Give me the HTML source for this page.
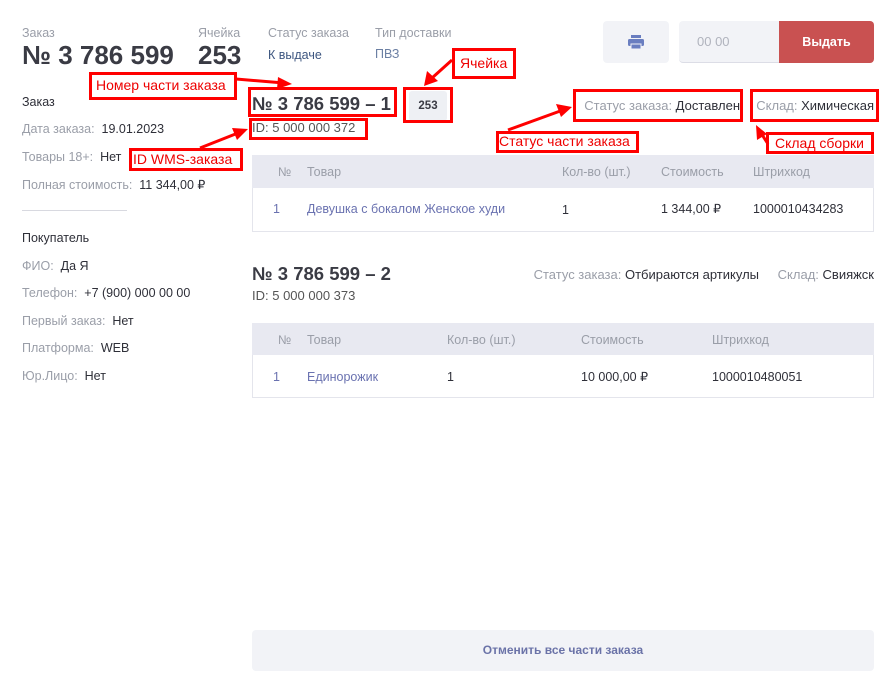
<!DOCTYPE html>
<html><head><meta charset="utf-8"><style>
*{margin:0;padding:0;box-sizing:border-box}
body{width:896px;height:687px;background:#fff;font-family:"Liberation Sans",sans-serif;position:relative;overflow:hidden;color:#2e2f38}
.a{position:absolute;white-space:nowrap}
.g{color:#9a9ea8}
.lbl{font-size:12.5px;color:#9a9ea8}
.v{font-size:12.5px;color:#2e2f38}
.big{font-size:26px;font-weight:bold;color:#3a3b44}
.h{font-size:18.5px;font-weight:bold;color:#3a3b44}
.th{position:absolute;left:252px;width:622px;background:#e8e9f1}
.tr{position:absolute;left:252px;width:622px;border:1px solid #e4e5ec;border-top:none}
.c{position:absolute;font-size:12.5px;white-space:nowrap}
.lk{color:#6a72b0}
.rb{position:absolute;border:3px solid #f00}
.rt{position:absolute;color:#e00;font-size:14px;white-space:nowrap}
</style></head><body>
<div class="a lbl" style="left:22px;top:26px">Заказ</div>
<div class="a big" style="left:22px;top:40px">№ 3 786 599</div>
<div class="a lbl" style="left:198px;top:26px">Ячейка</div>
<div class="a big" style="left:198px;top:40px">253</div>
<div class="a lbl" style="left:268px;top:26px">Статус заказа</div>
<div class="a" style="left:268px;top:48px;font-size:12.5px;color:#3d5680">К выдаче</div>
<div class="a lbl" style="left:375px;top:26px">Тип доставки</div>
<div class="a" style="left:375px;top:47px;font-size:12.5px;color:#6b7fa3">ПВЗ</div>

<div class="a" style="left:603px;top:21px;width:66px;height:42px;background:#f2f3f7;border-radius:4px">
<svg style="position:absolute;left:25px;top:14px" width="16" height="14" viewBox="0 0 16 14"><rect x="3" y="0" width="10" height="3" fill="#6a7ec0"/><rect x="0" y="4" width="16" height="7" rx="1.5" fill="#6a7ec0"/><rect x="3" y="9" width="10" height="5" fill="#6a7ec0" stroke="#f2f3f7" stroke-width="1"/></svg></div>
<div class="a" style="left:679px;top:21px;width:100px;height:42px;background:#f2f3f7;border-radius:4px 0 0 4px;border-bottom:1px solid #dcdde6"></div>
<div class="a" style="left:697px;top:34px;font-size:13px;color:#b0b3bd">00 00</div>
<div class="a" style="left:779px;top:21px;width:95px;height:42px;background:#c95151;border-radius:0 4px 4px 0;color:#fff;font-weight:bold;font-size:12.5px;text-align:center;line-height:42px">Выдать</div>

<div class="a v" style="left:22px;top:95px">Заказ</div>
<div class="a" style="left:22px;top:122px;font-size:12.5px"><span class="g">Дата заказа:</span>&nbsp; 19.01.2023</div>
<div class="a" style="left:22px;top:150px;font-size:12.5px"><span class="g">Товары 18+:</span>&nbsp; Нет</div>
<div class="a" style="left:22px;top:177px;font-size:12.5px"><span class="g">Полная стоимость:</span>&nbsp; 11 344,00 ₽</div>
<div class="a" style="left:22px;top:210px;width:105px;height:1px;background:#d8d9e0"></div>
<div class="a v" style="left:22px;top:231px">Покупатель</div>
<div class="a" style="left:22px;top:259px;font-size:12.5px"><span class="g">ФИО:</span>&nbsp; Да Я</div>
<div class="a" style="left:22px;top:286px;font-size:12.5px"><span class="g">Телефон:</span>&nbsp; +7 (900) 000 00 00</div>
<div class="a" style="left:22px;top:314px;font-size:12.5px"><span class="g">Первый заказ:</span>&nbsp; Нет</div>
<div class="a" style="left:22px;top:341px;font-size:12.5px"><span class="g">Платформа:</span>&nbsp; WEB</div>
<div class="a" style="left:22px;top:369px;font-size:12.5px"><span class="g">Юр.Лицо:</span>&nbsp; Нет</div>

<div class="a h" style="left:252px;top:93px">№ 3 786 599 – 1</div>
<div class="a" style="left:252px;top:120px;font-size:13px;color:#555">ID: 5 000 000 372</div>
<div class="a" style="left:409px;top:91px;width:38px;height:30px;background:#eef0f4;border-radius:3px;font-size:11.5px;font-weight:bold;text-align:center;line-height:30px;color:#3a3b44">253</div>
<div class="a" style="right:156px;top:98px;font-size:13px"><span class="g">Статус заказа:</span> Доставлен</div>
<div class="a" style="right:22px;top:98px;font-size:13px"><span class="g">Склад:</span> Химическая</div>

<div class="th" style="top:155px;height:33px"></div>
<div class="c g" style="left:278px;top:165px">№</div><div class="c g" style="left:307px;top:165px">Товар</div><div class="c g" style="left:562px;top:165px">Кол-во (шт.)</div><div class="c g" style="left:661px;top:165px">Стоимость</div><div class="c g" style="left:753px;top:165px">Штрихкод</div>
<div class="tr" style="top:188px;height:44px"></div>
<div class="c lk" style="left:273px;top:202px">1</div><div class="c lk" style="left:307px;top:202px">Девушка с бокалом Женское худи</div><div class="c" style="left:562px;top:203px">1</div><div class="c" style="left:661px;top:201px">1 344,00 ₽</div><div class="c" style="left:753px;top:202px">1000010434283</div>

<div class="a h" style="left:252px;top:263px">№ 3 786 599 – 2</div>
<div class="a" style="left:252px;top:288px;font-size:13px;color:#555">ID: 5 000 000 373</div>
<div class="a" style="right:137px;top:267px;font-size:13px"><span class="g">Статус заказа:</span> Отбираются артикулы</div>
<div class="a" style="right:22px;top:267px;font-size:13px"><span class="g">Склад:</span> Свияжск</div>

<div class="th" style="top:323px;height:32px"></div>
<div class="c g" style="left:278px;top:333px">№</div><div class="c g" style="left:307px;top:333px">Товар</div><div class="c g" style="left:447px;top:333px">Кол-во (шт.)</div><div class="c g" style="left:581px;top:333px">Стоимость</div><div class="c g" style="left:712px;top:333px">Штрихкод</div>
<div class="tr" style="top:355px;height:43px"></div>
<div class="c lk" style="left:273px;top:370px">1</div><div class="c lk" style="left:307px;top:370px">Единорожик</div><div class="c" style="left:447px;top:370px">1</div><div class="c" style="left:581px;top:369px">10 000,00 ₽</div><div class="c" style="left:712px;top:370px">1000010480051</div>

<div class="a" style="left:252px;top:630px;width:622px;height:41px;background:#f2f3f7;border-radius:4px;text-align:center;line-height:41px;font-size:12px;font-weight:bold;color:#6b73a8">Отменить все части заказа</div>

<div class="rb" style="left:89px;top:72px;width:148px;height:28px"></div><div class="rt" style="left:96px;top:77px">Номер части заказа</div>
<div class="rb" style="left:248px;top:87px;width:149px;height:30px"></div>
<div class="rb" style="left:249px;top:118px;width:119px;height:22px"></div>
<div class="rb" style="left:129px;top:148px;width:114px;height:23px"></div><div class="rt" style="left:133px;top:151px">ID WMS-заказа</div>
<div class="rb" style="left:452px;top:48px;width:64px;height:31px"></div><div class="rt" style="left:460px;top:55px">Ячейка</div>
<div class="rb" style="left:403px;top:87px;width:50px;height:36px"></div>
<div class="rb" style="left:573px;top:89px;width:170px;height:33px"></div>
<div class="rb" style="left:750px;top:89px;width:129px;height:33px"></div>
<div class="rb" style="left:496px;top:131px;width:143px;height:22px"></div><div class="rt" style="left:499px;top:133px">Статус части заказа</div>
<div class="rb" style="left:766px;top:132px;width:108px;height:22px"></div><div class="rt" style="left:775px;top:135px">Склад сборки</div>
<svg class="a" style="left:0;top:0" width="896" height="687"><g stroke="#f00" stroke-width="3" fill="#f00">
<line x1="236" y1="79" x2="284" y2="83"/><polygon points="292,84 278,77 277,89" stroke="none"/>
<line x1="200" y1="148" x2="238" y2="133"/><polygon points="248,129 232,128 237,140" stroke="none"/>
<line x1="452" y1="60" x2="432" y2="78"/><polygon points="424,86 427,71 438,81" stroke="none"/>
<line x1="508" y1="130" x2="563" y2="110"/><polygon points="572,107 556,104 561,117" stroke="none"/>
<line x1="768" y1="144" x2="761" y2="133"/><polygon points="756,125 757,140 767,134" stroke="none"/>
</g></svg>
</body></html>
